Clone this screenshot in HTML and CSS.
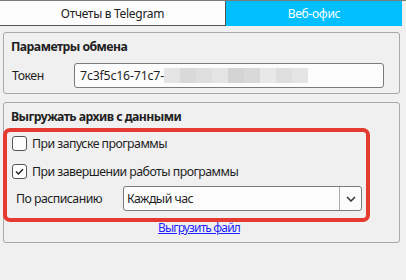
FILE: index.html
```html
<!DOCTYPE html>
<html lang="ru">
<head>
<meta charset="utf-8">
<title>Веб-офис</title>
<link rel="stylesheet" href="styles.css">
</head>
<body>
<div class="tabs">
  <div class="tab tab-inactive">Отчеты в Telegram</div>
  <div class="tab tab-active">Веб-офис</div>
</div>
<div class="content">
  <section class="group group-exchange">
    <div class="group-title">Параметры обмена</div>
    <div class="token-row">
      <span class="token-label">Токен</span>
      <div class="input">
        <span class="token-text">7c3f5c16-71c7-</span><span class="blur"><span class="bl b1"></span><span class="bl b2"></span><span class="bl b3"></span><span class="bl b1"></span><span class="bl b4"></span><span class="bl b2"></span><span class="bl b5"></span><span class="bl b3"></span><span class="bl b1"></span></span>
      </div>
    </div>
  </section>
  <section class="group group-archive">
    <div class="group-title">Выгружать архив с данными</div>
    <label class="check-row first">
      <span class="checkbox"></span>
      <span class="check-text">При запуске программы</span>
    </label>
    <label class="check-row">
      <span class="checkbox checked">
        <svg width="11" height="11" viewBox="0 0 11 11"><path d="M2 5.6 L4.4 8 L9 3.2" fill="none" stroke="#222" stroke-width="1.4"/></svg>
      </span>
      <span class="check-text">При завершении работы программы</span>
    </label>
    <div class="schedule-row">
      <span class="schedule-label">По расписанию</span>
      <div class="select">
        <span class="select-value">Каждый час</span>
        <span class="select-arrow">
          <svg width="10" height="6" viewBox="0 0 10 6"><path d="M1 1 L5 5 L9 1" fill="none" stroke="#333" stroke-width="1.5"/></svg>
        </span>
      </div>
    </div>
    <div class="link-row"><a class="link" href="#">Выгрузить файл</a></div>
    <div class="highlight"></div>
  </section>
</div>
</body>
</html>
```
FILE: styles.css
```css
html, body {
  margin: 0;
  padding: 0;
}
body {
  width: 406px;
  height: 280px;
  background: #f0f0f0;
  font-family: "Noto Sans", "Segoe UI", sans-serif;
  font-size: 12.3px;
  letter-spacing: -0.52px;
  color: #1e1e1e;
  overflow: hidden;
}
.tabs {
  display: flex;
  height: 25px;
  border-top: 1px solid #7a7a7a;
}
.tab {
  display: flex;
  align-items: center;
  justify-content: center;
  box-sizing: border-box;
  font-size: 12px;
  letter-spacing: -0.3px;
}
.tab-inactive {
  width: 226px;
  background: #fdfdfd;
  border-right: 1px solid #555;
  border-bottom: 1px solid #555;
  color: #222;
}
.tab-active {
  width: 176px;
  background: #00bfff;
  color: #ffffff;
}
.content {
  padding: 6px 6px 0 3px;
}
.group {
  border: 1px solid #a8a8a8;
  border-radius: 3px;
  padding: 5px 15px 5px 8px;
}
.group-title {
  font-weight: 700;
  line-height: 18px;
  margin-left: -1px;
  letter-spacing: -0.55px;
  color: #202020;
}
.token-row {
  display: flex;
  align-items: center;
  margin-top: 7px;
}
.token-label {
  width: 62px;
}
.input {
  flex: 1;
  height: 25px;
  box-sizing: border-box;
  border: 1px solid #7a7a7a;
  border-radius: 3px;
  background: #fcfcfc;
  display: flex;
  align-items: center;
  padding-left: 5px;
}
.token-text {
  letter-spacing: -0.15px;
}
.blur {
  display: flex;
  height: 15px;
}
.bl {
  width: 16px;
  height: 15px;
}
.b1 { background: #e4e4e4; }
.b2 { background: #d9d9d9; }
.b3 { background: #dedede; }
.b4 { background: #d4d4d4; }
.b5 { background: #e8e8e8; }
.group-archive {
  position: relative;
  margin-top: 8px;
}
.check-row {
  display: flex;
  align-items: center;
  height: 21px;
  margin-top: 7px;
}
.checkbox {
  width: 15px;
  height: 15px;
  box-sizing: border-box;
  border: 1px solid #555;
  border-radius: 3px;
  background: #fdfdfd;
  margin-right: 5px;
  display: flex;
  align-items: center;
  justify-content: center;
}
.schedule-row {
  display: flex;
  align-items: center;
  margin-top: 4px;
  padding-right: 22px;
}
.schedule-label {
  width: 107px;
  margin-left: 4px;
}
.select {
  flex: 1;
  height: 25px;
  box-sizing: border-box;
  border: 1px solid #7a7a7a;
  border-radius: 3px;
  background: #fcfcfc;
  display: flex;
  align-items: center;
}
.select-value {
  flex: 1;
  padding-left: 3px;
}
.select-arrow {
  width: 21px;
  height: 100%;
  border-left: 1px solid #aaa;
  display: flex;
  align-items: center;
  justify-content: center;
}
.link-row {
  text-align: center;
  margin-top: 8px;
  line-height: 18px;
  padding-left: 2px;
}
.link {
  color: #1f1fff;
  text-decoration: underline;
  font-size: 12px;
  letter-spacing: -0.85px;
}
.highlight {
  position: absolute;
  left: -1px;
  top: 25px;
  width: 367px;
  height: 94px;
  box-sizing: border-box;
  border: 4px solid #e53a2f;
  border-radius: 7px;
  pointer-events: none;
}
```
